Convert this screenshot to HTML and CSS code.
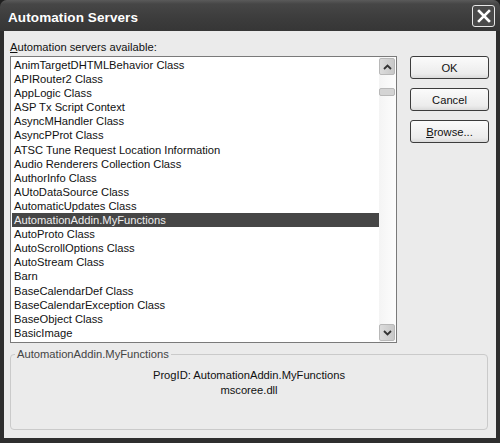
FILE: index.html
```html
<!DOCTYPE html>
<html>
<head>
<meta charset="utf-8">
<link rel="stylesheet" href="styles.css">
</head>
<body>
<div class="window">
  <div class="titlebar">
    <span class="title">Automation Servers</span>
    <span class="close"><svg width="14" height="14" viewBox="0 0 14 14"><path d="M2 2 L12 12 M12 2 L2 12" stroke="#fff" stroke-width="2.6" stroke-linecap="square"/></svg></span>
  </div>
  <div class="client">
    <div class="label"><u>A</u>utomation servers available:</div>
    <div class="row">
      <div class="listbox">
        <ul class="items">
          <li>AnimTargetDHTMLBehavior Class</li>
          <li>APIRouter2 Class</li>
          <li>AppLogic Class</li>
          <li>ASP Tx Script Context</li>
          <li>AsyncMHandler Class</li>
          <li>AsyncPProt Class</li>
          <li>ATSC Tune Request Location Information</li>
          <li>Audio Renderers Collection Class</li>
          <li>AuthorInfo Class</li>
          <li>AUtoDataSource Class</li>
          <li>AutomaticUpdates Class</li>
          <li class="sel">AutomationAddin.MyFunctions</li>
          <li>AutoProto Class</li>
          <li>AutoScrollOptions Class</li>
          <li>AutoStream Class</li>
          <li>Barn</li>
          <li>BaseCalendarDef Class</li>
          <li>BaseCalendarException Class</li>
          <li>BaseObject Class</li>
          <li>BasicImage</li>
        </ul>
        <div class="scrollbar">
          <div class="sbtn"><svg width="9" height="6" viewBox="0 0 9 6"><path d="M1 5 L4.5 1.5 L8 5" fill="none" stroke="#333" stroke-width="1.8"/></svg></div>
          <div class="track"><div class="thumb"></div></div>
          <div class="sbtn"><svg width="9" height="6" viewBox="0 0 9 6"><path d="M1 1 L4.5 4.5 L8 1" fill="none" stroke="#333" stroke-width="1.8"/></svg></div>
        </div>
      </div>
      <div class="buttons">
        <div class="btn">OK</div>
        <div class="btn">Cancel</div>
        <div class="btn"><u>B</u>rowse...</div>
      </div>
    </div>
    <div class="group">
      <div class="legend">AutomationAddin.MyFunctions</div>
      <div class="info">ProgID: AutomationAddin.MyFunctions</div>
      <div class="info">mscoree.dll</div>
    </div>
  </div>
</div>
</body>
</html>
```
FILE: styles.css
```css
html, body {
  margin: 0;
  padding: 0;
  background: #1e1e1e;
}
.window {
  width: 500px;
  height: 443px;
  display: flex;
  flex-direction: column;
  background: #2e2e2e;
  border-radius: 7px 7px 0 0;
  overflow: hidden;
  font-family: "Liberation Sans", Arial, sans-serif;
  font-size: 11.2px;
  color: #111;
}
.titlebar {
  height: 31px;
  flex: none;
  display: flex;
  align-items: center;
  justify-content: space-between;
  padding: 0 5px 0 8px;
  background: linear-gradient(#5a5a5a 0, #464646 4px, #3c3c3c 60%, #363636 100%);
}
.title {
  color: #fff;
  font-weight: bold;
  font-size: 13.5px;
  letter-spacing: 0.1px;
  padding-top: 3px;
}
.close {
  width: 21px;
  height: 20px;
  border: 1px solid #e8e8e8;
  border-radius: 3px;
  background: #4a4a4a;
  display: flex;
  align-items: center;
  justify-content: center;
  margin-top: 1px;
}
.client {
  flex: 1;
  background: #ebebeb;
  margin: 0 4px 5px 4px;
  padding: 9px 7px 0 6px;
  display: flex;
  flex-direction: column;
}
.label {
  height: 16px;
  line-height: 14px;
}
.row {
  display: flex;
  gap: 13px;
}
.listbox {
  width: 385px;
  height: 285px;
  border: 1px solid #7a7a7a;
  background: #fff;
  display: flex;
}
.items {
  list-style: none;
  margin: 0;
  padding: 1px 0 0 1px;
  flex: 1;
  overflow: hidden;
}
.items li {
  height: 14.1px;
  line-height: 14px;
  padding-left: 2px;
  white-space: nowrap;
}
.items li.sel {
  background: #464646;
  color: #eee;
}
.scrollbar {
  width: 16px;
  display: flex;
  flex-direction: column;
  background: linear-gradient(90deg, #f4f4f4, #fdfdfd);
  padding: 1px 1px 1px 0;
}
.sbtn {
  height: 15px;
  border: 1px solid #b8b8b8;
  border-radius: 2px;
  background: linear-gradient(90deg, #dcdcdc, #c8c8c8);
  display: flex;
  align-items: center;
  justify-content: center;
}
.track {
  flex: 1;
  padding-top: 13px;
}
.thumb {
  height: 6px;
  border: 1px solid #b8b8b8;
  border-radius: 2px;
  background: #d4d4d4;
}
.buttons {
  display: flex;
  flex-direction: column;
  gap: 9px;
}
.btn {
  width: 77px;
  height: 21px;
  border: 1px solid #3c3c3c;
  border-radius: 3px;
  background: linear-gradient(#fbfbfb, #ececec 80%, #dadada);
  display: flex;
  align-items: center;
  justify-content: center;
}
.group {
  margin-top: 11px;
  width: 478px;
  height: 76px;
  border: 1px solid #cacaca;
  border-radius: 4px;
  position: relative;
  box-sizing: border-box;
  padding-top: 13px;
}
.legend {
  position: absolute;
  top: -8px;
  left: 4px;
  background: #ebebeb;
  padding: 0 2px;
  color: #444;
  line-height: 14px;
}
.info {
  text-align: center;
  line-height: 15px;
}
```
